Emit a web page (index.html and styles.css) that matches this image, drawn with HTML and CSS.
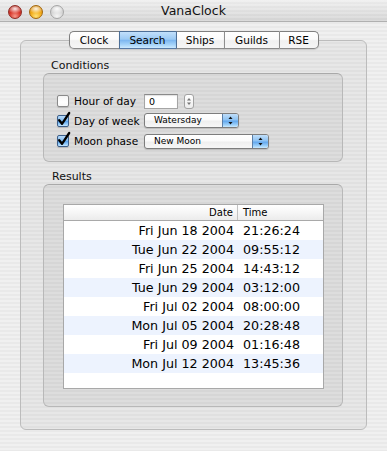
FILE: index.html
```html
<!DOCTYPE html>
<html>
<head>
<meta charset="utf-8">
<link rel="stylesheet" href="styles.css">
</head>
<body>
<div class="window">
  <div class="titlebar">
    <div class="lights">
      <span class="light red"></span>
      <span class="light yellow"></span>
      <span class="light gray"></span>
    </div>
    <div class="title">VanaClock</div>
    <div></div>
  </div>
  <div class="content">
    <div class="tabs">
      <div class="tab t-clock">Clock</div>
      <div class="tab t-search active">Search</div>
      <div class="tab t-ships">Ships</div>
      <div class="tab t-guilds">Guilds</div>
      <div class="tab t-rse">RSE</div>
    </div>
    <div class="tabbox">
      <div class="grouplabel">Conditions</div>
      <div class="group conditions">
        <div class="cond-row">
          <div class="checkcell">
            <span class="check"></span>
            <span class="cond-label">Hour of day</span>
          </div>
          <div class="textfield">0</div>
          <div class="stepper">
            <svg width="8" height="13" viewBox="0 0 8 13"><path d="M4 3 L6 5.5 L2 5.5 Z" fill="#777"/><path d="M4 10 L6 7.5 L2 7.5 Z" fill="#777"/></svg>
          </div>
        </div>
        <div class="cond-row">
          <div class="checkcell">
            <span class="check checked"><svg width="14" height="15" viewBox="0 0 14 15"><path d="M2.2 8.2 L5 11.8 L12.2 1" fill="none" stroke="#000" stroke-width="2.3" stroke-linecap="round" stroke-linejoin="round"/></svg></span>
            <span class="cond-label">Day of week</span>
          </div>
          <div class="popup pop-week">
            <span class="popup-text">Watersday</span>
            <span class="popup-arrows"><svg width="15" height="13" viewBox="0 0 15 13"><path d="M7.5 2.5 L9.5 5 L5.5 5 Z" fill="#111"/><path d="M7.5 10.5 L9.5 8 L5.5 8 Z" fill="#111"/></svg></span>
          </div>
        </div>
        <div class="cond-row">
          <div class="checkcell">
            <span class="check checked"><svg width="14" height="15" viewBox="0 0 14 15"><path d="M2.2 8.2 L5 11.8 L12.2 1" fill="none" stroke="#000" stroke-width="2.3" stroke-linecap="round" stroke-linejoin="round"/></svg></span>
            <span class="cond-label">Moon phase</span>
          </div>
          <div class="popup pop-moon">
            <span class="popup-text">New Moon</span>
            <span class="popup-arrows"><svg width="15" height="13" viewBox="0 0 15 13"><path d="M7.5 2.5 L9.5 5 L5.5 5 Z" fill="#111"/><path d="M7.5 10.5 L9.5 8 L5.5 8 Z" fill="#111"/></svg></span>
          </div>
        </div>
      </div>
      <div class="grouplabel results-label">Results</div>
      <div class="group results">
        <div class="table">
          <div class="thead">
            <div class="th th-date">Date</div>
            <div class="th th-time">Time</div>
          </div>
          <div class="tr"><div class="td-date">Fri Jun 18 2004</div><div class="td-time">21:26:24</div></div>
          <div class="tr alt"><div class="td-date">Tue Jun 22 2004</div><div class="td-time">09:55:12</div></div>
          <div class="tr"><div class="td-date">Fri Jun 25 2004</div><div class="td-time">14:43:12</div></div>
          <div class="tr alt"><div class="td-date">Tue Jun 29 2004</div><div class="td-time">03:12:00</div></div>
          <div class="tr"><div class="td-date">Fri Jul 02 2004</div><div class="td-time">08:00:00</div></div>
          <div class="tr alt"><div class="td-date">Mon Jul 05 2004</div><div class="td-time">20:28:48</div></div>
          <div class="tr"><div class="td-date">Fri Jul 09 2004</div><div class="td-time">01:16:48</div></div>
          <div class="tr alt"><div class="td-date">Mon Jul 12 2004</div><div class="td-time">13:45:36</div></div>
        </div>
      </div>
    </div>
  </div>
</div>
</body>
</html>
```
FILE: styles.css
```css
html, body {
  margin: 0;
  padding: 0;
}
body {
  width: 387px;
  height: 451px;
  overflow: hidden;
  font-family: "DejaVu Sans", sans-serif;
  color: #000;
  background: #ededed;
}
.window {
  width: 387px;
  height: 451px;
  background: repeating-linear-gradient(to bottom, #f0f0f0 0px, #f0f0f0 2px, #e9e9e9 2px, #e9e9e9 4px);
}
.titlebar {
  height: 22px;
  box-sizing: border-box;
  border-bottom: 1px solid #b0b0b0;
  display: grid;
  grid-template-columns: 1fr auto 1fr;
  align-items: center;
  background:
    linear-gradient(to bottom, rgba(255,255,255,0.3), rgba(0,0,0,0.07)),
    repeating-linear-gradient(to bottom, #ebebeb 0px, #ebebeb 2px, #e3e3e3 2px, #e3e3e3 4px);
  border-radius: 5px 5px 0 0;
}
.lights {
  display: flex;
  gap: 7px;
  padding-left: 8px;
  padding-top: 1px;
}
.light {
  width: 14px;
  height: 14px;
  border-radius: 50%;
  box-sizing: border-box;
}
.red {
  border: 1px solid #8e2a22;
  background:
    radial-gradient(ellipse 60% 38% at 50% 24%, rgba(255,255,255,0.9), rgba(255,255,255,0) 100%),
    radial-gradient(circle at 50% 85%, #f59a8c 0%, #d9392d 45%, #a31d14 100%);
}
.yellow {
  border: 1px solid #a2670c;
  background:
    radial-gradient(ellipse 60% 38% at 50% 24%, rgba(255,255,255,0.9), rgba(255,255,255,0) 100%),
    radial-gradient(circle at 50% 85%, #ffe27a 0%, #f3ad1c 45%, #c97a06 100%);
}
.gray {
  border: 1px solid #a6a6a6;
  background:
    radial-gradient(ellipse 60% 38% at 50% 24%, rgba(255,255,255,0.95), rgba(255,255,255,0) 100%),
    radial-gradient(circle at 50% 85%, #f4f4f4 0%, #d6d6d6 50%, #bdbdbd 100%);
}
.title {
  font-size: 12.5px;
  line-height: 22px;
  color: #111;
}
.content {
  padding: 9px 20px 0 20px;
}
.tabs {
  display: flex;
  justify-content: center;
  margin-bottom: -9px;
  position: relative;
  z-index: 1;
}
.tab {
  height: 18px;
  box-sizing: border-box;
  border-top: 1px solid #7f7f7f;
  border-bottom: 1px solid #8a8a8a;
  border-left: 1px solid #8e8e8e;
  font-size: 10.5px;
  line-height: 16px;
  text-align: center;
  background: linear-gradient(to bottom, #ffffff 0%, #fbfbfb 45%, #f0f0f0 55%, #f6f6f6 100%);
  box-shadow: 0 1px 1px rgba(0,0,0,0.12);
}
.t-clock { width: 50px; border-left-color: #7f7f7f; border-radius: 5px 0 0 5px; }
.t-search { width: 57px; }
.t-ships { width: 48px; }
.t-guilds { width: 55px; }
.t-rse { width: 40px; border-right: 1px solid #7f7f7f; border-radius: 0 5px 5px 0; }
.tab.active {
  border-top-color: #4d6f97;
  border-bottom-color: #5579a6;
  border-left-color: #4d6f97;
  background: linear-gradient(to bottom, #c2e0fb 0%, #9ccaf4 45%, #7db7f0 52%, #a6d4fa 80%, #cdeafe 100%);
}
.tab.active + .tab {
  border-left-color: #4d6f97;
}
.tabbox {
  height: 390px;
  box-sizing: border-box;
  border: 1px solid #bcbcbc;
  border-radius: 6px;
  padding: 18px 23px 22px 22px;
  background: rgba(0,0,0,0.035);
}
.grouplabel {
  font-size: 11px;
  line-height: 14px;
  padding-left: 8px;
  color: #111;
}
.results-label {
  margin-top: 8px;
  padding-left: 9px;
}
.group {
  width: 300px;
  box-sizing: border-box;
  border: 1px solid #b8b8b8;
  border-top-color: #a9a9a9;
  border-radius: 6px;
  background: rgba(0,0,0,0.045);
}
.conditions {
  height: 89px;
  padding: 17px 0 10px 13px;
}
.cond-row {
  height: 20px;
  display: flex;
  align-items: center;
}
.checkcell {
  width: 87px;
  display: flex;
  align-items: center;
  gap: 5px;
}
.check {
  width: 12px;
  height: 12px;
  box-sizing: border-box;
  border: 1px solid #8a8a8a;
  border-radius: 2px;
  background: linear-gradient(to bottom, #f4f4f4, #ffffff 60%, #fafafa);
  box-shadow: 0 1px 1px rgba(0,0,0,0.15);
  display: block;
  flex: none;
}
.check.checked {
  border-color: #3c5f8a;
  background: linear-gradient(to bottom, #b9dbfa 0%, #82bcf1 45%, #5ea6ee 55%, #9bd0fb 85%, #c9e8fe 100%);
}
.check svg {
  display: block;
  margin: -4px 0 0 -1px;
  overflow: visible;
}
.cond-label {
  font-size: 10.6px;
  line-height: 14px;
  white-space: nowrap;
}
.textfield {
  width: 34px;
  height: 15px;
  box-sizing: border-box;
  border: 1px solid #a5a5a5;
  border-top-color: #8a8a8a;
  background: #fff;
  font-size: 9.5px;
  line-height: 13px;
  padding-left: 4px;
  box-shadow: inset 0 1px 1px rgba(0,0,0,0.12);
}
.stepper {
  width: 10px;
  height: 15px;
  margin-left: 6px;
  box-sizing: border-box;
  border: 1px solid #a2a2a2;
  border-radius: 3px;
  background: linear-gradient(to bottom, #ffffff, #ececec);
  display: flex;
  align-items: center;
  justify-content: center;
}
.stepper svg { display: block; }
.popup {
  height: 15px;
  box-sizing: border-box;
  border: 1px solid #7d7d7d;
  border-radius: 3px;
  display: flex;
  overflow: hidden;
  background: linear-gradient(to bottom, #ffffff 0%, #fbfbfb 45%, #efefef 55%, #f7f7f7 100%);
  box-shadow: 0 1px 1px rgba(0,0,0,0.15);
}
.pop-week { width: 95px; margin-top: -1px; }
.pop-moon { width: 125px; }
.popup-text {
  flex: 1;
  font-size: 9px;
  line-height: 13px;
  padding-left: 9px;
  white-space: nowrap;
}
.popup-arrows {
  width: 15px;
  border-left: 1px solid #5b7fa8;
  background: linear-gradient(to bottom, #c0def9 0%, #8ec3f3 45%, #63a8ee 55%, #9fd2fa 85%, #cbe9fe 100%);
  display: flex;
  align-items: center;
  justify-content: center;
}
.popup-arrows svg { display: block; }
.results {
  height: 223px;
  padding: 19px 18px 17px 19px;
}
.table {
  width: 261px;
  height: 185px;
  box-sizing: border-box;
  border: 1px solid #a8a8a8;
  background: #fff;
}
.thead {
  display: grid;
  grid-template-columns: 174px 1fr;
  height: 16px;
  box-sizing: border-box;
  border-bottom: 1px solid #a9a9a9;
  background: linear-gradient(to bottom, #ffffff 0%, #f6f6f6 50%, #ebebeb 100%);
}
.th {
  font-size: 10px;
  line-height: 15px;
  white-space: nowrap;
}
.th-date {
  text-align: right;
  padding-right: 4px;
  border-right: 1px solid #c2c2c2;
}
.th-time {
  padding-left: 5px;
}
.tr {
  display: grid;
  grid-template-columns: 174px 1fr;
  height: 19px;
  font-size: 12.7px;
  line-height: 19px;
  white-space: nowrap;
}
.tr.alt {
  background: #edf3fe;
}
.td-date {
  text-align: right;
  padding-right: 4px;
}
.td-time {
  padding-left: 5px;
}
```
